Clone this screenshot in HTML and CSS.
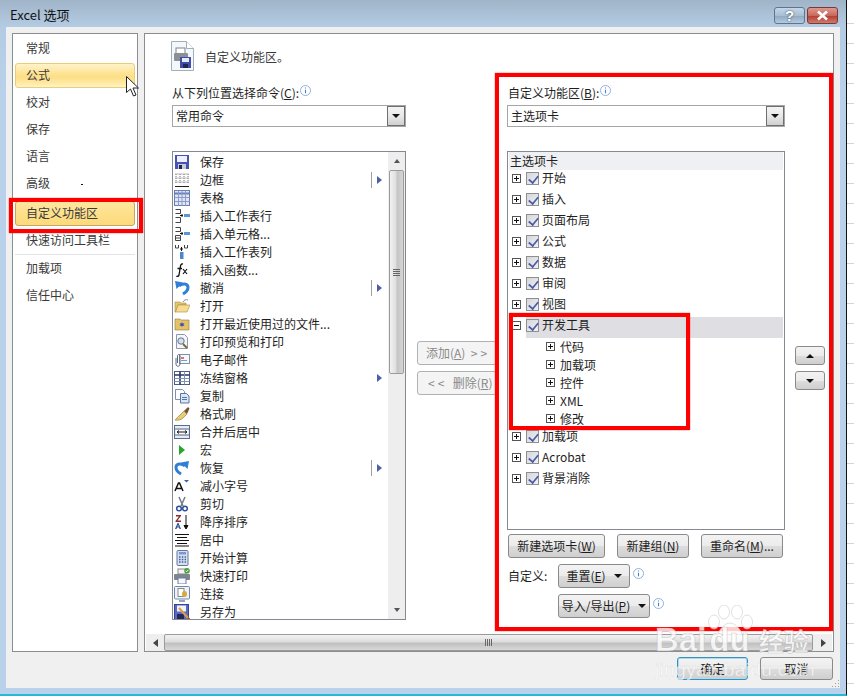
FILE: index.html
```html
<!DOCTYPE html>
<html lang="zh-CN">
<head>
<meta charset="utf-8">
<title>Excel 选项</title>
<link rel="stylesheet" href="styles.css">
</head>
<body>
<div class="desktop">
  <div class="window">
    <header class="titlebar">
      <span class="title">Excel 选项</span>
      <div class="caption">
        <span class="cap help">?</span>
        <span class="cap close"><svg width="15" height="11" viewBox="0 0 15 11"><path d="M3 1.5l9 8M12 1.5l-9 8" stroke="#fff" stroke-width="2.6"/></svg></span>
      </div>
    </header>
    <div class="client">
      <div class="panes">
        <nav class="nav">
          <div class="nav-item">常规</div>
          <div class="nav-item hover">公式</div>
          <div class="nav-item">校对</div>
          <div class="nav-item">保存</div>
          <div class="nav-item">语言</div>
          <div class="nav-item">高级</div>
          <div class="nav-item selected">自定义功能区</div>
          <div class="nav-item">快速访问工具栏</div>
          <div class="nav-sep"></div>
          <div class="nav-item">加载项</div>
          <div class="nav-item">信任中心</div>
        </nav>
        <main class="main">
          <div class="content">
            <div class="heading">
              <svg class="heading-icon" width="23" height="30" viewBox="0 0 23 30">
                <path d="M.5 .5h15l7 7v22H.5z" fill="#f4f7fb" stroke="#a3aebb"/>
                <path d="M15.5 .5v7h7" fill="#fff" stroke="#a3aebb"/>
                <rect x="5" y="7" width="9" height="6" fill="#fff" stroke="#7d8389"/>
                <rect x="3" y="12" width="14" height="8" rx="1" fill="#8b9097"/>
                <rect x="9" y="16" width="11" height="11" fill="#3f4fa8"/>
                <rect x="11" y="17" width="7" height="4" fill="#e8ecf6"/>
                <rect x="12" y="23" width="5" height="4" fill="#20284f"/>
              </svg>
              <span class="heading-text">自定义功能区。</span>
            </div>
            <div class="columns">
              <section class="col-left">
                <div class="field-label"><span>从下列位置选择命令(<u>C</u>):</span><svg class="info" width="11" height="11" viewBox="0 0 11 11"><circle cx="5.5" cy="5.5" r="5" fill="#fff" stroke="#8fb2e0"/><path d="M5.5 2.5v1M5.5 4.8v3.4" stroke="#4d7fc4" stroke-width="1.1"/></svg></div>
                <div class="combo"><span class="combo-text">常用命令</span><span class="combo-btn"><i class="tri-down"></i></span></div>
                <div class="cmd-list">
                  <div class="cmd-rows">
                    <div class="cmd"><svg class="ico" viewBox="0 0 16 16"><rect x="1" y="1" width="14" height="14" fill="#4653b4"/><rect x="3" y="2" width="10" height="6" fill="#eef1fb"/><rect x="4" y="10" width="8" height="5" fill="#c7cbd8"/><rect x="5" y="11" width="3" height="4" fill="#1e2552"/></svg><span>保存</span></div>
                    <div class="cmd"><svg class="ico" viewBox="0 0 16 16"><path d="M1.5 2h13M1.5 6h13M1.5 10h13M2 2v10M6 2v10M10 2v10M14 2v10" stroke="#777" stroke-dasharray="1 1" fill="none"/><path d="M1 14.5h14" stroke="#222"/></svg><span>边框</span><span class="sub split"><i class="tri-right"></i></span></div>
                    <div class="cmd"><svg class="ico" viewBox="0 0 16 16"><rect x=".5" y=".5" width="15" height="15" fill="#dfe5f4" stroke="#6b7fb4"/><path d="M.5 3.500h15" stroke="#6b7fb4" stroke-width="2"/><path d="M.5 7.500h15M.5 11.500h15M4.500 .5v15M8 .5v15M11.500 .5v15" stroke="#8c9cc8"/></svg><span>表格</span></div>
                    <div class="cmd"><svg class="ico" viewBox="0 0 16 16"><path d="M1.500 1.500h5v4h-5M1.500 9.500h5v5h-5" fill="none" stroke="#444"/><path d="M6 7.500h3M8 6v3" stroke="#111"/><rect x="10" y="6" width="6" height="3" fill="#5d94d3"/></svg><span>插入工作表行</span></div>
                    <div class="cmd"><svg class="ico" viewBox="0 0 16 16"><path d="M1.500 1.500h5v4h-5M1.500 9.500h5v5h-5zM1.500 12h5" fill="none" stroke="#444"/><path d="M6 7.500h3M8 6v3" stroke="#111"/><rect x="10" y="6" width="6" height="3" fill="#5d94d3"/></svg><span>插入单元格...</span></div>
                    <div class="cmd"><svg class="ico" viewBox="0 0 16 16"><path d="M1.500 1v3h3V1M10.500 1v3h3V1" fill="none" stroke="#444"/><path d="M7.500 3v4M6 5h3" stroke="#111"/><rect x="6" y="8" width="3.500" height="7" fill="#4d86cc"/></svg><span>插入工作表列</span></div>
                    <div class="cmd"><svg class="ico" viewBox="0 0 16 16"><path d="M9 2C6.500 1.500 6.500 4 6 7L5 13c-.3 1.500-2 1.500-2.500 1M3.500 6.500H8" fill="none" stroke="#111" stroke-width="1.300"/><path d="M9 7l4 5M13 7l-4 5" stroke="#111" stroke-width="1.200"/></svg><span>插入函数...</span></div>
                    <div class="cmd"><svg class="ico" viewBox="0 0 16 16"><path d="M5 6c3-3 9-3 9 1.500 0 3-2.500 5-5 6.500" fill="none" stroke="#2f7fd6" stroke-width="3"/><path d="M1 1l8 1.500L2.500 9z" fill="#2f7fd6"/></svg><span>撤消</span><span class="sub split"><i class="tri-right"></i></span></div>
                    <div class="cmd"><svg class="ico" viewBox="0 0 16 16"><path d="M1 4h5l1 1h5v2H4L2 14H1z" fill="#e8c56e" stroke="#a98a3c" stroke-width=".6"/><path d="M4 7h12l-3 7H1.500z" fill="#f6dc92" stroke="#a98a3c" stroke-width=".6"/><path d="M9 4c1-2 3-3 5-2" fill="none" stroke="#7f8ca5"/></svg><span>打开</span></div>
                    <div class="cmd"><svg class="ico" viewBox="0 0 16 16"><path d="M1 3h5l1 1h8v10H1z" fill="#e6c266" stroke="#8f7a3a" stroke-width=".6"/><path d="M8 6l.8 1.700L10.500 7l-1 1.500 1 1.500-1.700-.6L8 11l-.8-1.600L5.500 10l1-1.500-1-1.500 1.700.7z" fill="#3247c0"/></svg><span>打开最近使用过的文件...</span></div>
                    <div class="cmd"><svg class="ico" viewBox="0 0 16 16"><path d="M2.500 .5h8l3 3v11h-11z" fill="#f4f6fa" stroke="#8c99ad"/><circle cx="7" cy="7" r="3.200" fill="#cfe0f2" stroke="#6b7683"/><path d="M9 10l4 4" stroke="#7a6a3a" stroke-width="2"/></svg><span>打印预览和打印</span></div>
                    <div class="cmd"><svg class="ico" viewBox="0 0 16 16"><rect x="5.500" y="2.500" width="10" height="9" fill="#f7f9fc" stroke="#8093ad"/><path d="M7 6h3" stroke="#d04b3a" stroke-width="1.500"/><path d="M7 8.500h6" stroke="#7d9ac0"/><path d="M2 6v6c0 3 4 3 4 0V4c0-2-2.500-2-2.500 0v7" fill="none" stroke="#5a6a82"/></svg><span>电子邮件</span></div>
                    <div class="cmd"><svg class="ico" viewBox="0 0 16 16"><rect x=".5" y="1.500" width="15" height="13" fill="#fff" stroke="#4a5d86"/><path d="M.5 5h15M6 1.500v13" stroke="#29385f" stroke-width="1.600"/><path d="M.5 8.500h15M.5 11.500h15M10.500 1.500v13" stroke="#7f92b8"/></svg><span>冻结窗格</span><span class="sub"><i class="tri-right"></i></span></div>
                    <div class="cmd"><svg class="ico" viewBox="0 0 16 16"><path d="M1.500 1.500h7l2 2v8h-9z" fill="#fff" stroke="#7d91b6"/><path d="M6.500 5.500h6l2.500 2.500v7H6.500z" fill="#dce6f5" stroke="#5677aa"/><path d="M8 9.500h5M8 11.500h5" stroke="#5677aa"/></svg><span>复制</span></div>
                    <div class="cmd"><svg class="ico" viewBox="0 0 16 16"><path d="M10 5l3 3-4 4c-2 2-5 2.500-8 2 2-1 2-3 4-4z" fill="#e8cc7a" stroke="#9b8440" stroke-width=".7"/><path d="M10 5l4-4 1.500 1.500-2.500 5.500z" fill="#74513a"/></svg><span>格式刷</span></div>
                    <div class="cmd"><svg class="ico" viewBox="0 0 16 16"><rect x=".5" y="1.500" width="15" height="13" fill="#e6ebf4" stroke="#5b6c8c"/><path d="M.5 5h15M.5 11h15" stroke="#5b6c8c"/><rect x="2" y="6" width="12" height="4" fill="#fff"/><path d="M4 8h8M3 8l2-1.500M3 8l2 1.500M13 8l-2-1.500M13 8l-2 1.500" stroke="#111" fill="none"/></svg><span>合并后居中</span></div>
                    <div class="cmd"><svg class="ico" viewBox="0 0 16 16"><path d="M5 3l6 5-6 5z" fill="#2aa52a"/></svg><span>宏</span></div>
                    <div class="cmd"><svg class="ico" viewBox="0 0 16 16"><path d="M11 6C8 3 2 3 2 7.500c0 3 2.500 5 5 6.500" fill="none" stroke="#2f7fd6" stroke-width="3"/><path d="M15 1l-8 1.500L13.500 9z" fill="#2f7fd6"/></svg><span>恢复</span><span class="sub split"><i class="tri-right"></i></span></div>
                    <div class="cmd"><svg class="ico" viewBox="0 0 16 16"><path d="M1 13l3.500-8h1L9 13M2.500 10.500h5" fill="none" stroke="#111" stroke-width="1.500"/><path d="M10 2h5l-2.500 2.500z" fill="#3a5fa8"/></svg><span>减小字号</span></div>
                    <div class="cmd"><svg class="ico" viewBox="0 0 16 16"><path d="M5 1l4 9M11 1L7 10" stroke="#757b85" stroke-width="1.500"/><circle cx="5" cy="12.500" r="2.300" fill="none" stroke="#2f4f9b" stroke-width="1.500"/><circle cx="11" cy="12.500" r="2.300" fill="none" stroke="#2f4f9b" stroke-width="1.500"/></svg><span>剪切</span></div>
                    <div class="cmd"><svg class="ico" viewBox="0 0 16 16"><path d="M2 1h5v1L3.500 6.500H7V8H1.500V7L5 2.500H2z" fill="#8b2d2d"/><path d="M1 15l2.500-6h1L7 15H5.500l-.5-1.500H3L2.500 15zM3.400 12.500h1.200L4 10.800z" fill="#2f4f9b"/><path d="M12 1v13M10 11.500l2 3.500 2-3.500z" stroke="#111" fill="#111"/></svg><span>降序排序</span></div>
                    <div class="cmd"><svg class="ico" viewBox="0 0 16 16"><path d="M1 2.500h14M3 5.500h10M1 8.500h14M3 11.500h10M1 14h14" stroke="#111" stroke-width="1.100"/></svg><span>居中</span></div>
                    <div class="cmd"><svg class="ico" viewBox="0 0 16 16"><rect x="3" y=".5" width="11" height="15" rx="1" fill="#d6dfee" stroke="#62779f"/><rect x="5" y="2" width="7" height="2.500" fill="#7c97c9"/><path d="M5 7h1.500M7.800 7h1.500M10.600 7H12M5 9.500h1.500M7.800 9.500h1.500M10.600 9.500H12M5 12h1.500M7.800 12h1.500M10.600 12H12" stroke="#3e5f9c" stroke-width="1.300"/></svg><span>开始计算</span></div>
                    <div class="cmd"><svg class="ico" viewBox="0 0 16 16"><rect x="4" y="1" width="8" height="5" fill="#f3f3f3" stroke="#888"/><rect x="0" y="6" width="16" height="6" rx="1" fill="#7e858e"/><rect x="4" y="10" width="8" height="6" fill="#f8f8f8" stroke="#6a7ea8"/><circle cx="13" cy="2.800" r="2.800" fill="#47a03a"/><path d="M11.600 2.800l1 1 1.800-2" stroke="#fff" fill="none"/></svg><span>快速打印</span></div>
                    <div class="cmd"><svg class="ico" viewBox="0 0 16 16"><rect x=".5" y=".5" width="15" height="12.500" rx="1" fill="#eef3fa" stroke="#6f87ad"/><path d="M5 15h6" stroke="#6f87ad" stroke-width="1.500"/><rect x="4" y="2.500" width="6" height="8" fill="#fff" stroke="#888"/><ellipse cx="10.500" cy="8" rx="2.500" ry="3" fill="#d8a93f"/></svg><span>连接</span></div>
                    <div class="cmd"><svg class="ico" viewBox="0 0 16 16"><rect x=".5" y=".5" width="14" height="15" fill="#5b68c4" stroke="#39438f"/><rect x="3" y="1.500" width="9" height="6" fill="#f0f2fb"/><rect x="3" y="10" width="7" height="5" fill="#232a55"/><path d="M5 4l9 10" stroke="#d8a048" stroke-width="2.200"/><path d="M14 14l1.500 1.500" stroke="#c0392b" stroke-width="2"/></svg><span>另存为</span></div>
                  </div>
                  <div class="vscroll">
                    <span class="v-arrow"><i class="tri-up small"></i></span>
                    <div class="v-thumb"><span class="grip-h"></span></div>
                    <div class="v-track"></div>
                    <span class="v-arrow"><i class="tri-down small"></i></span>
                  </div>
                </div>
              </section>
              <section class="col-mid">
                <div class="btn disabled add"><span>添加(<u>A</u>) &nbsp;<span class="spaced">&gt;&gt;</span></span></div>
                <div class="btn disabled remove"><span><span class="spaced">&lt;&lt;</span> &nbsp;删除(<u>R</u>)</span></div>
              </section>
              <section class="col-right">
                <div class="field-label indent"><span>自定义功能区(<u>B</u>):</span><svg class="info" width="11" height="11" viewBox="0 0 11 11"><circle cx="5.500" cy="5.500" r="5" fill="#fff" stroke="#8fb2e0"/><path d="M5.500 2.500v1M5.500 4.800v3.400" stroke="#4d7fc4" stroke-width="1.100"/></svg></div>
                <div class="combo"><span class="combo-text">主选项卡</span><span class="combo-btn"><i class="tri-down"></i></span></div>
                <div class="tree">
                  <div class="tree-head">主选项卡</div>
                  <div class="tree-row first"><i class="box plus"></i><i class="check"></i><span>开始</span></div>
                  <div class="tree-row"><i class="box plus"></i><i class="check"></i><span>插入</span></div>
                  <div class="tree-row"><i class="box plus"></i><i class="check"></i><span>页面布局</span></div>
                  <div class="tree-row"><i class="box plus"></i><i class="check"></i><span>公式</span></div>
                  <div class="tree-row"><i class="box plus"></i><i class="check"></i><span>数据</span></div>
                  <div class="tree-row"><i class="box plus"></i><i class="check"></i><span>审阅</span></div>
                  <div class="tree-row"><i class="box plus"></i><i class="check"></i><span>视图</span></div>
                  <div class="tree-row open"><i class="box minus"></i><i class="check"></i><span>开发工具</span></div>
                  <div class="kids">
                    <div class="kid"><i class="box plus"></i><span>代码</span></div>
                    <div class="kid"><i class="box plus"></i><span>加载项</span></div>
                    <div class="kid"><i class="box plus"></i><span>控件</span></div>
                    <div class="kid"><i class="box plus"></i><span>XML</span></div>
                    <div class="kid"><i class="box plus"></i><span>修改</span></div>
                  </div>
                  <div class="tree-row"><i class="box plus"></i><i class="check"></i><span>加载项</span></div>
                  <div class="tree-row"><i class="box plus"></i><i class="check"></i><span>Acrobat</span></div>
                  <div class="tree-row"><i class="box plus"></i><i class="check"></i><span>背景消除</span></div>
                </div>
                <div class="tree-actions">
                  <div class="btn w97"><span>新建选项卡(<u>W</u>)</span></div>
                  <div class="btn w72"><span>新建组(<u>N</u>)</span></div>
                  <div class="btn w82"><span>重命名(<u>M</u>)...</span></div>
                </div>
                <div class="reset-row">
                  <span class="reset-label">自定义:</span>
                  <div class="btn w72 drop"><span>重置(<u>E</u>)</span><i class="tri-down"></i></div>
                  <svg class="info" width="11" height="11" viewBox="0 0 11 11"><circle cx="5.500" cy="5.500" r="5" fill="#fff" stroke="#8fb2e0"/><path d="M5.500 2.500v1M5.500 4.800v3.400" stroke="#4d7fc4" stroke-width="1.100"/></svg>
                </div>
                <div class="reset-row second">
                  <div class="btn w92 drop"><span>导入/导出(<u>P</u>)</span><i class="tri-down"></i></div>
                  <svg class="info" width="11" height="11" viewBox="0 0 11 11"><circle cx="5.500" cy="5.500" r="5" fill="#fff" stroke="#8fb2e0"/><path d="M5.500 2.500v1M5.500 4.800v3.400" stroke="#4d7fc4" stroke-width="1.100"/></svg>
                </div>
              </section>
              <section class="col-move">
                <div class="btn move"><i class="tri-up"></i></div>
                <div class="btn move"><i class="tri-down"></i></div>
              </section>
            </div>
          </div>
          <div class="hscroll">
            <span class="h-arrow"><i class="tri-left"></i></span>
            <div class="h-thumb"><span class="grip-v"></span></div>
            <span class="h-arrow"><i class="tri-right dark"></i></span>
          </div>
        </main>
      </div>
      <footer class="footer">
        <div class="btn ok">确定</div>
        <div class="btn cancel">取消</div>
      </footer>
      <svg class="size-grip" width="8" height="8" viewBox="0 0 8 8"><path d="M6 0h1v1H6zM3 3h1v1H3zM6 3h1v1H6zM0 6h1v1H0zM3 6h1v1H3zM6 6h1v1H6z" fill="#a0a0a0"/></svg>
    </div>
    <div class="mark red-nav"></div>
    <div class="mark red-panel"></div>
    <div class="mark red-tree"></div>
    <svg class="cursor" width="13" height="21" viewBox="0 0 13 21"><path d="M.5 .5v16l4-3.500 3 7 2.500-1-3-7h5.500z" fill="#fff" stroke="#222"/></svg>
    <i class="speck"></i>
  </div>
  <div class="sheet"></div>
  <div class="watermark">
    <svg class="paw" width="48" height="40" viewBox="0 0 48 40"><g fill="#fff" fill-opacity=".8" stroke="#c6c6c6" stroke-opacity=".55"><ellipse cx="8" cy="17" rx="5.500" ry="7"/><ellipse cx="18" cy="7" rx="5.500" ry="7"/><ellipse cx="31" cy="7" rx="5.500" ry="7"/><ellipse cx="41" cy="17" rx="5.500" ry="7"/><path d="M24 18c6 0 13 9 13 15 0 6-8 5-13 4-5 1-13 2-13-4 0-6 7-15 13-15z"/></g></svg>
    <div class="wm-brand">Bai<span class="wm-du">du</span> <span class="wm-cn">经验</span></div>
    <div class="wm-url">jingyan.baidu.com</div>
  </div>
</div>
</body>
</html>
```

FILE: styles.css
```css
* { box-sizing: border-box; }
html, body { margin: 0; padding: 0; }
body {
  width: 854px;
  height: 696px;
  overflow: hidden;
  background: #fff;
  font: 12px/16px "Noto Sans CJK SC", "Liberation Sans", sans-serif;
  color: #1e1e1e;
}
i { display: block; font-style: normal; }
u { text-underline-offset: 1px; }

.desktop { position: relative; display: flex; width: 854px; height: 696px; }

.window {
  position: relative;
  flex: none;
  width: 847px;
  height: 696px;
  display: flex;
  flex-direction: column;
  background: linear-gradient(#a0b4c8 0, #b4cce3 27px, #b9d1ea 100px);
  border-right: 1px solid #111;
  border-bottom: 2px solid #27b8d8;
}
.sheet {
  flex: 1;
  background-image: repeating-linear-gradient(#fff 0, #fff 19px, #d4d4d4 19px, #d4d4d4 20px);
  background-position: 0 4px;
}

.titlebar {
  flex: none;
  height: 27px;
  display: flex;
  justify-content: space-between;
  padding: 7px 8px 0 10px;
}
.title { font-size: 13px; line-height: 16px; color: #111; }
.caption { display: flex; gap: 2px; }
.cap {
  width: 31px;
  height: 17px;
  border: 1px solid #62748a;
  border-radius: 3px;
  display: flex;
  align-items: center;
  justify-content: center;
}
.help {
  background: linear-gradient(#c5d7e8 0, #a7bed4 50%, #8ea8c2 51%, #b4cbe0 100%);
  color: #fff;
  font: bold 15px/15px "Liberation Sans", sans-serif;
  text-shadow: 0 0 2px #333;
}
.close {
  background: linear-gradient(#dc9a90 0, #c9695e 50%, #b33c30 51%, #cf7a6c 100%);
  border-color: #7a3a34;
}

.client {
  position: relative;
  flex: none;
  height: 661px;
  margin: 0 6px;
  padding: 6px 6px 0;
  background: #f0f0f0;
}
.panes { display: flex; gap: 6px; height: 619px; }

.nav {
  flex: none;
  width: 126px;
  background: #fff;
  border: 1px solid #8b8d91;
  padding: 2px 2px 0;
  display: flex;
  flex-direction: column;
  gap: 2px;
}
.nav-item {
  height: 25px;
  flex: none;
  line-height: 21px;
  padding-left: 10px;
  color: #3a3a3a;
  border: 1px solid transparent;
  border-radius: 3px;
}
.nav-item.hover {
  background: linear-gradient(#fef3c9 0, #fdde85 55%, #fee79f 80%, #fff3c8 100%);
  border-color: #eccd77;
}
.nav-item.selected {
  margin-top: 3px;
  background: linear-gradient(#fde6a0 0, #fddf87 60%, #fcd97c 100%);
  border-color: #c6a560;
}
.nav-sep { height: 1px; flex: none; margin: -1px 0 -1px; background: #e2e3e5; }

.main {
  flex: none;
  width: 690px;
  background: #fff;
  border: 1px solid #8b8d91;
  display: flex;
  flex-direction: column;
}
.content { flex: none; height: 600px; padding-left: 27px; }
.heading { height: 50px; padding: 7px 0 0 0; display: flex; align-items: flex-start; margin-left: -1px; }
.heading-icon { flex: none; }
.heading-text { margin: 8px 0 0 11px; color: #3a3a3a; }

.columns { display: flex; align-items: flex-start; }
.col-left { flex: none; width: 234px; }
.col-mid {
  flex: none;
  width: 101px;
  padding: 257px 0 0 11px;
  display: flex;
  flex-direction: column;
  gap: 6px;
}
.col-right { flex: none; width: 278px; }
.col-move {
  flex: none;
  margin-left: 10px;
  padding-top: 262px;
  display: flex;
  flex-direction: column;
  gap: 6px;
}

.field-label {
  height: 21px;
  line-height: 16px;
  white-space: nowrap;
  padding-top: 1px;
  display: flex;
  align-items: flex-start;
}
.field-label.indent { padding-left: 1px; }
.field-label .info { margin: 0 0 0 1px; }
.info { flex: none; }

.combo {
  height: 22px;
  display: flex;
  justify-content: space-between;
  border: 1px solid #a6a6a6;
  background: #fff;
  margin-bottom: 24px;
}
.combo-text { padding-left: 3px; line-height: 19px; }
.combo-btn {
  width: 18px;
  display: flex;
  align-items: center;
  justify-content: center;
  border: 1px solid #6f6f6f;
  background: linear-gradient(#f4f4f4 0, #e8e8e8 50%, #d0d0d0 100%);
}

.tri-down { width: 0; height: 0; border-left: 4px solid transparent; border-right: 4px solid transparent; border-top: 4px solid #111; }
.tri-up { width: 0; height: 0; border-left: 4px solid transparent; border-right: 4px solid transparent; border-bottom: 4px solid #111; }
.tri-down.small, .tri-up.small { border-left-width: 3px; border-right-width: 3px; border-top-color: #555; border-bottom-color: #555; }
.tri-right { width: 0; height: 0; border-top: 4px solid transparent; border-bottom: 4px solid transparent; border-left: 5px solid #4d5fa8; }
.tri-right.dark { border-left-color: #444; }
.tri-left { width: 0; height: 0; border-top: 4px solid transparent; border-bottom: 4px solid transparent; border-right: 5px solid #444; }

.cmd-list {
  height: 469px;
  display: flex;
  border: 1px solid #858a92;
  background: #fff;
  overflow: hidden;
}
.cmd-rows { flex: 1; padding-top: 1px; overflow: hidden; }
.cmd {
  height: 18px;
  display: flex;
  align-items: center;
  padding: 0 6px 0 1px;
  white-space: nowrap;
}
.ico { width: 16px; height: 16px; flex: none; margin-right: 10px; }
.sub { margin-left: auto; height: 16px; display: flex; align-items: center; }
.sub.split { border-left: 1px solid #9a9fa8; padding-left: 5px; }

.vscroll {
  flex: none;
  width: 17px;
  background: #eeeeee;
  display: flex;
  flex-direction: column;
  align-items: center;
}
.v-arrow { flex: none; height: 18px; display: flex; align-items: center; justify-content: center; }
.v-thumb {
  flex: none;
  width: 15px;
  height: 204px;
  border: 1px solid #9a9a9a;
  border-radius: 2px;
  background: linear-gradient(90deg, #f2f2f2 0, #dedede 45%, #c4c4c4 55%, #d6d6d6 100%);
  display: flex;
  align-items: center;
  justify-content: center;
}
.v-track { flex: 1; }
.grip-h { width: 7px; height: 7px; background: repeating-linear-gradient(#666 0, #666 1px, transparent 1px, transparent 2px); }
.grip-v { width: 7px; height: 7px; background: repeating-linear-gradient(90deg, #666 0, #666 1px, transparent 1px, transparent 2px); }

.tree {
  height: 379px;
  border: 1px solid #858a92;
  background: #fff;
  padding: 0 1px;
  margin-bottom: 4px;
}
.tree-head { height: 18px; line-height: 17px; padding-left: 1px; background: #eef0f4; color: #222; }
.tree-row {
  height: 21px;
  display: flex;
  align-items: center;
  padding-left: 3px;
}
.tree-row > span { margin-top: -2px; }
.tree-row.first { margin-top: -2px; }
.tree-row.open {
  height: 23px;
  padding-bottom: 2px;
  background: linear-gradient(transparent 2px, #dfdfe3 2px) no-repeat 17px 0;
}
.box {
  width: 9px;
  height: 9px;
  flex: none;
  margin-top: -1px;
  border: 1px solid #555;
  background-color: #fff;
  background-repeat: no-repeat;
  background-position: center;
}
.plus { background-image: linear-gradient(#111, #111), linear-gradient(#111, #111); background-size: 5px 1px, 1px 5px; }
.minus { background-image: linear-gradient(#111, #111); background-size: 5px 1px; }
.check {
  position: relative;
  width: 13px;
  height: 13px;
  flex: none;
  margin: -1px 3px 0 5px;
  border: 1px solid #8f8f8f;
  background: linear-gradient(135deg, #d4d6da, #f0f1f3);
}
.check::after {
  content: "";
  position: absolute;
  left: 3px;
  top: 0;
  width: 5px;
  height: 9px;
  border: solid #4a5aa5;
  border-width: 0 2px 2px 0;
  transform: rotate(40deg) scale(.85);
}
.kids { margin-bottom: -2px; padding-left: 37px; }
.kid { height: 18px; display: flex; align-items: center; gap: 5px; }

.tree-actions { display: flex; gap: 12px; margin: 0 0 6px 1px; }
.btn {
  height: 24px;
  flex: none;
  display: flex;
  align-items: center;
  justify-content: center;
  white-space: nowrap;
  border: 1px solid #8a8a8a;
  border-radius: 3px;
  background: linear-gradient(#f3f3f3 0, #ebebeb 50%, #dddddd 51%, #cfcfcf 100%);
  color: #1e1e1e;
}
.w97 { width: 97px; }
.w72 { width: 72px; }
.w82 { width: 82px; }
.w92 { width: 92px; }
.btn.drop { gap: 8px; }
.btn.disabled {
  width: 80px;
  background: #f4f4f4;
  border-color: #adb2b5;
  color: #8a8a8a;
  justify-content: flex-start;
}
.btn.add { padding-left: 8px; }
.btn.remove { padding-left: 10px; }
.spaced { letter-spacing: 3px; }
.btn.move { width: 30px; height: 19px; }

.reset-row { display: flex; align-items: flex-start; height: 24px; margin-bottom: 6px; padding-left: 1px; }
.reset-label { width: 50px; flex: none; line-height: 24px; }
.reset-row .info { margin: 4px 0 0 3px; }
.reset-row.second { padding-left: 51px; }

.hscroll {
  flex: none;
  height: 17px;
  margin: 0 1px;
  display: flex;
  align-items: stretch;
  background: #eeeeee;
}
.h-arrow { flex: none; width: 18px; display: flex; align-items: center; justify-content: center; }
.h-thumb {
  flex: 1;
  margin-right: 1px;
  border: 1px solid #9a9a9a;
  border-radius: 2px;
  background: linear-gradient(#f2f2f2 0, #dedede 45%, #c0c0c0 55%, #d8d8d8 100%);
  display: flex;
  align-items: center;
  justify-content: center;
}

.footer { display: flex; justify-content: flex-end; gap: 12px; padding: 5px 1px 0 0; }
.btn.ok { width: 71px; height: 23px; border: 1px solid #3c8fb8; box-shadow: inset 0 0 0 1px #a9dcf2; }
.btn.cancel { width: 73px; height: 23px; }
.size-grip { position: absolute; right: 0; bottom: 0; }

.mark { position: absolute; border: 4px solid #ff0000; box-shadow: 0 0 1px #ff0000; pointer-events: none; }
.red-nav { left: 9px; top: 198px; width: 134px; height: 35px; }
.red-panel { left: 495px; top: 73px; width: 338px; height: 558px; }
.red-tree { left: 509px; top: 313px; width: 181px; height: 117px; }

.cursor { position: absolute; left: 126px; top: 76px; }
.speck { position: absolute; left: 81px; top: 184px; width: 2px; height: 1px; background: #111; }

.watermark { position: absolute; left: 655px; top: 605px; width: 160px; height: 80px; pointer-events: none; }
.paw { position: absolute; left: 51px; top: 0; }
.wm-brand {
  position: absolute;
  left: 0;
  top: 18px;
  white-space: nowrap;
  font: bold 33px/34px "Liberation Sans", sans-serif;
  color: rgba(255, 255, 255, .78);
  -webkit-text-stroke: .6px rgba(170, 170, 170, .6);
}
.wm-du { margin-left: 3px; }
.wm-cn { font: bold 25px/34px "Noto Sans CJK SC", sans-serif; margin-left: 0; }
.wm-url {
  position: absolute;
  left: 0;
  top: 53px;
  white-space: nowrap;
  font: 19px/24px "Liberation Sans", sans-serif;
  letter-spacing: .4px;
  color: rgba(255, 255, 255, .7);
  -webkit-text-stroke: .3px rgba(170, 170, 170, .4);
}
```
